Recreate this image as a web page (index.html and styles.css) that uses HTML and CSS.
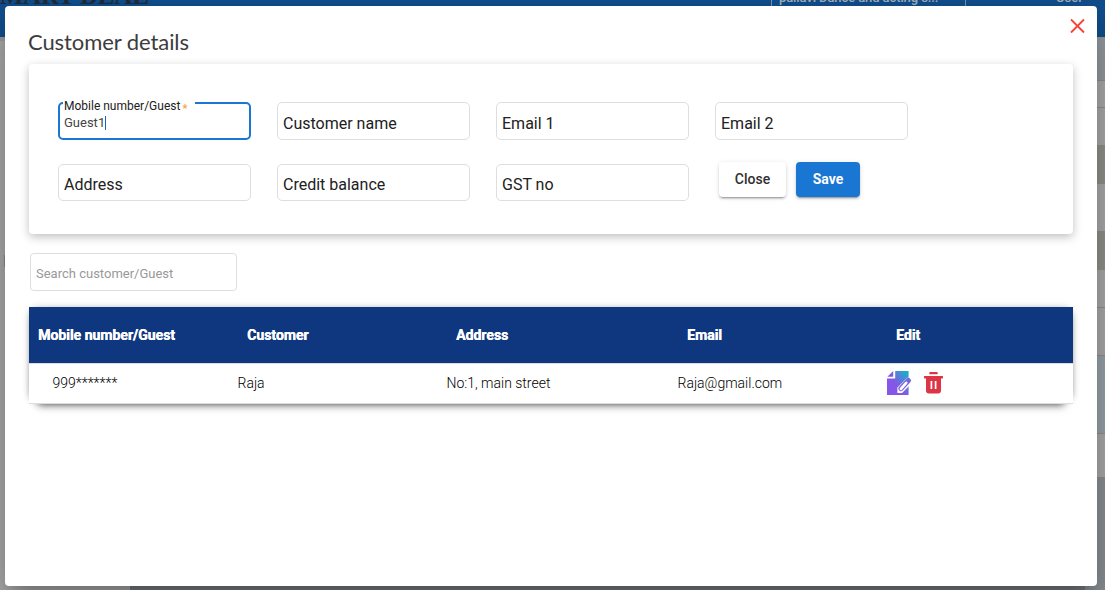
FILE: index.html
```html
<!DOCTYPE html>
<html lang="en">
<head>
<meta charset="utf-8">
<title>Customer details</title>
<link rel="stylesheet" href="styles.css">
</head>
<body>
<div class="page">
  <header class="topbar"><span class="brand">SMART DEAL</span><span class="shop">pallavi Dance and acting s...</span><span class="user">User</span></header>
  <div class="backdrop-body">
    <div class="left-panel"><i class="tick"></i></div>
    <div class="right-panel">
      <i class="r cool r1"></i><i class="r r2"></i><i class="r r3"></i><i class="r olive r4"></i><i class="r r5"></i><i class="r olive r6"></i><i class="r r7"></i><i class="r r8"></i><i class="r blue r9"></i><i class="r r10"></i><i class="r rest"></i>
    </div>
  </div>
</div>
<main class="dialog">
  <svg class="x" viewBox="0 0 16 16"><path d="M1.5 1.5 14.5 14.5M14.5 1.5 1.5 14.5"/></svg>
  <h1 class="title">Customer details</h1>
  <section class="card">
    <div class="field focused"><span class="label">Mobile number/Guest <b class="req">*</b></span><span class="value">Guest1</span><i class="caret"></i></div>
    <div class="field">Customer name</div>
    <div class="field">Email 1</div>
    <div class="field">Email 2</div>
    <div class="field short">Address</div>
    <div class="field short">Credit balance</div>
    <div class="field short">GST no</div>
    <div class="actions"><button class="btn close">Close</button><button class="btn save">Save</button></div>
  </section>
  <div class="search">Search customer/Guest</div>
  <section class="table">
    <div class="row head"><span>Mobile number/Guest</span><span>Customer</span><span>Address</span><span>Email</span><span>Edit</span></div>
    <div class="row data"><span class="num">999*******</span><span>Raja</span><span>No:1, main street</span><span>Raja@gmail.com</span>
      <span class="icons">
        <svg class="edit" viewBox="0 0 24 24"><defs><linearGradient id="g" gradientUnits="userSpaceOnUse" x1="9" y1="13" x2="21" y2="1"><stop offset="0" stop-color="#8657e6"/><stop offset="1" stop-color="#12b5c5"/></linearGradient></defs><path fill="url(#g)" d="M8.2 0H21.6V24H0V7.6H8.2Z"/><path fill="#8657e6" d="M0.4 5.8 6.2 0V5.8Z"/><path fill="#fff" d="M10.4 22V16.6L19.5 7.4Q22 5.4 24.6 7.6V12.4L15 22Z"/><path fill="none" stroke="#7466df" stroke-width="5.2" stroke-linecap="round" stroke-linejoin="round" d="M21.4 9.6 14 17.6"/><path fill="none" stroke="#fff" stroke-width="2.6" stroke-linecap="round" d="M19.2 11.8 13.9 17.9"/></svg>
        <svg class="trash" viewBox="0 0 19 22"><path fill="#dc3545" d="M6 0h7q.7 0 .7.7V2.2H5.3V.7Q5.3 0 6 0ZM.5 4h18q.5 0 .5.6v1.2q0 .6-.5.6H17V18.4Q17 21.4 14 21.4H5Q2 21.4 2 18.4V6.4H.5Q0 6.4 0 5.8V4.6Q0 4 .5 4Z"/><path stroke="#fff" stroke-width="1.7" d="M7.4 9v8M11.6 9v8"/></svg>
      </span></div>
  </section>
</main>
</body>
</html>
```
FILE: styles.css
```css
* { box-sizing: border-box; }
body { margin: 0; height: 590px; overflow: hidden; font-family: Roboto, "Liberation Sans", sans-serif; }
.page { height: 590px; display: flex; flex-direction: column; background: #777f84; }
.topbar { height: 37px; flex: none; background: #11508f; display: flex; overflow: hidden; color: #a9b4c0; font-size: 13px; }
.brand { width: 771px; margin-top: -18px; text-indent: -14px; font: bold 25px/28px "Liberation Serif", serif; color: #222c38; letter-spacing: -.2px; }
.shop { width: 195px; border: solid #7d95b3; border-width: 0 1px; padding-left: 7px; line-height: 16px; margin-top: -10px; font-weight: 500; letter-spacing: -.1px; }
.user { margin: -10px 0 0 90px; line-height: 16px; font-weight: 500; }
.backdrop-body { flex: 1; display: flex; justify-content: space-between; }
.left-panel { width: 130px; background: #adadad; border-top: 4px solid #9b9fa3; padding-top: 214px; }
.tick { display: block; width: 5px; height: 12px; border-right: 1px solid #8c8c8c; }
.right-panel { width: 20px; display: flex; flex-direction: column; }
.r { background: #adadad; border-bottom: 1px solid #919191; flex: none; }
.cool { background: #979da1; }
.olive { background: #95958d; border: 0; }
.blue { background: #9ba6ad; }
.r1 { height: 44px; }
.r2 { height: 27px; }
.r3 { height: 37px; border: 0; }
.r4, .r6 { height: 39px; }
.r5 { height: 47px; border: 0; }
.r7 { height: 38px; }
.r8 { height: 48px; }
.r9 { height: 78px; }
.r10 { height: 44px; }
.rest { flex: 1; background: #8c9398; border: 0; }
.dialog { position: absolute; left: 5px; top: 6px; width: 1092px; height: 580px; padding: 24px; background: #fff; border-radius: 4px; box-shadow: 0 11px 15px -7px rgba(0,0,0,.2), 0 24px 38px 3px rgba(0,0,0,.14), 0 9px 46px 8px rgba(0,0,0,.12); color: #212121; }
.x { position: absolute; left: 1064px; top: 12px; width: 17px; height: 16px; stroke: #f44336; stroke-width: 1.8; fill: none; }
.title { margin: 0 0 0 -1px; height: 34px; font: 400 22px/24px Lato, sans-serif; color: #3c3c3c; letter-spacing: -.08px; }
.card { width: 1044px; height: 170px; padding: 38px 29px; border-radius: 4px; box-shadow: 0 3px 10px rgba(0,0,0,.25); display: grid; grid-template-columns: repeat(4, 193px); column-gap: 26px; row-gap: 24px; grid-template-rows: 38px 37px; }
.field { border: 1px solid #dedede; border-radius: 5px; padding: 3px 5px 0; font-size: 16px; line-height: 36px; color: #212121; }
.short { line-height: 34px; }
.focused { position: relative; border: 2px solid #1976d2; padding: 9px 4px; font-size: 13px; line-height: 19px; display: flex; align-items: flex-start; }
.label { position: absolute; left: 3px; top: -5px; width: 132px; height: 15px; padding-left: 1px; background: #fff; font-size: 12px; line-height: 15px; white-space: nowrap; }
.req { color: #ff9c45; font-size: 11px; font-weight: 700; line-height: 10px; vertical-align: -2px; margin-left: -1px; }
.value { color: #444; }
.caret { width: 1px; height: 14px; margin-top: 3px; background: #1565c0; }
.actions { display: flex; gap: 10px; margin: -2px 0 0 4px; height: 35px; }
.btn { border: 0; border-radius: 4px; font: 500 14px/33px Roboto, sans-serif; padding: 0 0 1px; color: #303030; background: #fff; box-shadow: 0 3px 1px -2px rgba(0,0,0,.2), 0 2px 2px rgba(0,0,0,.14), 0 1px 5px rgba(0,0,0,.12); }
.close { width: 67px; }
.save { width: 64px; background: #1976d2; color: #fff; font-weight: 700; }
.search { width: 207px; height: 38px; margin: 19px 0 16px 1px; border: 1px solid #dedede; border-radius: 4px; padding: 2px 5px; font-size: 13px; line-height: 35px; color: #999; }
.table { width: 1044px; height: 97px; box-shadow: 0 10px 8px -9px rgba(0,0,0,.65), 5px 0 8px -7px rgba(0,0,0,.45), -5px 0 8px -7px rgba(0,0,0,.45), 0 -2px 8px -4px rgba(0,0,0,.3); }
.row { display: grid; grid-template-columns: 209px 209px 231px 209px 1fr; align-items: center; font-size: 14px; }
.head { height: 56px; padding-left: 9px; background: #0f377f; color: #fff; font-weight: 700; letter-spacing: 0; text-shadow: .4px 0 0 #fff; }
.data { height: 41px; padding: 0 0 1px; font-weight: 300; color: #000; background: #fff; border: solid #ddd; border-width: 1px 0; }
.data > span { margin-left: -.5px; }
.num { padding-left: 24px; }
.icons { display: flex; gap: 13px; align-items: center; }
.edit { width: 24px; height: 24px; overflow: visible; }
.trash { width: 19px; height: 22px; }
```
